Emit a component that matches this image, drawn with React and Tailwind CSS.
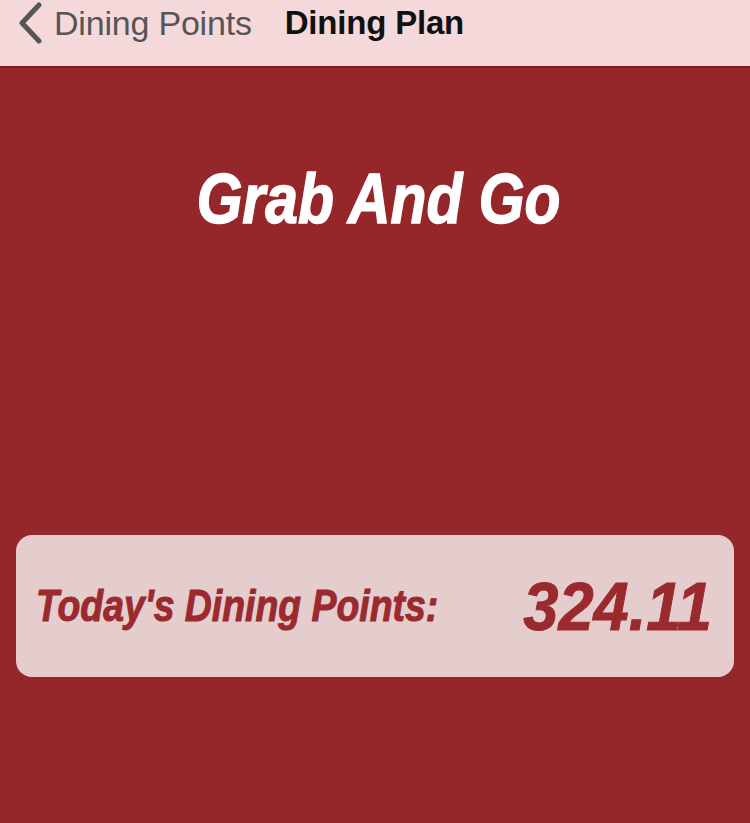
import React from 'react';

const cond = { fontFamily: '"Liberation Sans", Arial, sans-serif' };

export default function App() {
  return (
    <div className="w-[750px] h-[823px] bg-[#95262a] flex flex-col overflow-hidden">
      {/* Nav bar */}
      <div className="h-[68px] bg-[#f5d9da] border-b-2 border-[#7a1e22] flex items-start pt-[1px] font-['Liberation_Sans',Arial,sans-serif]">
        <div className="flex items-center h-[44px] pl-[16px]">
          <svg width="28" height="42" viewBox="0 0 28 42" className="mr-[10px]">
            <path d="M23 3 L6 21 L23 39" fill="none" stroke="#555555" strokeWidth="5" strokeLinecap="round" strokeLinejoin="round" />
          </svg>
          <span className="text-[34px] text-[#555555] tracking-[-0.2px]">Dining Points</span>
          <span className="text-[33px] font-bold text-[#111111] ml-[33px] tracking-[-0.2px]">Dining Plan</span>
        </div>
      </div>

      {/* Title */}
      <div className="pt-[96px] flex justify-center">
        <h1 style={cond} className="inline-block whitespace-nowrap scale-x-[0.84] origin-center text-[70px] leading-none font-bold italic text-white ml-[6px] [-webkit-text-stroke:1.5px_white]">
          Grab And Go
        </h1>
      </div>

      {/* Points card */}
      <div className="mt-[301px] mx-[16px] h-[142px] rounded-[16px] bg-[#e5cdce] flex items-center justify-between pl-[20px] pr-[28px]">
        <span style={cond} className="inline-block whitespace-nowrap scale-x-[0.85] origin-left text-[44px] font-bold italic text-[#9a2a2e] leading-none [-webkit-text-stroke:1px_#9a2a2e]">
          Today's Dining Points:
        </span>
        <span style={cond} className="inline-block whitespace-nowrap scale-x-[0.93] origin-right text-[68px] font-bold italic text-[#9a2a2e] leading-none [-webkit-text-stroke:1px_#9a2a2e]">
          324.11
        </span>
      </div>
    </div>
  );
}
